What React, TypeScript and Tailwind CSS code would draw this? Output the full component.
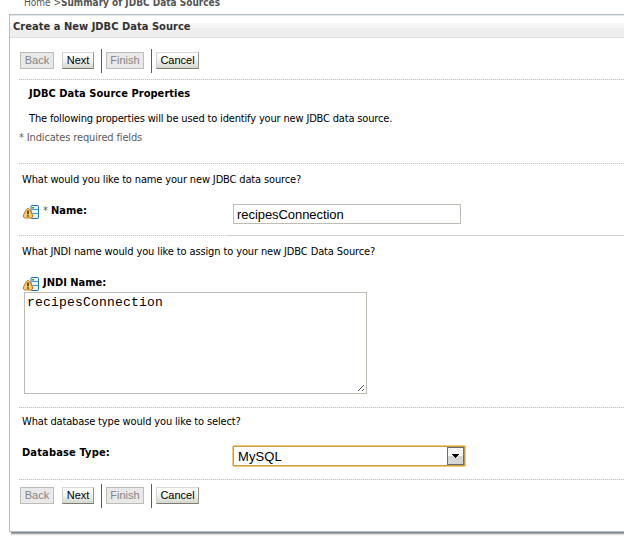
import type { ReactNode } from "react";

const UI = "font-['DejaVu_Sans_Condensed','DejaVu_Sans',sans-serif] [font-stretch:condensed]";

function Dotted() {
  return <div className="ml-[9px] h-px shrink-0 bg-[repeating-linear-gradient(90deg,#c4c4c4_0_1px,#f1f1f1_1px_2px)]" />;
}

function Btn({ children, disabled, className }: { children: ReactNode; disabled?: boolean; className: string }) {
  const look = disabled
    ? "border-[#bdbdb6] bg-[#e9e9e9] text-[#858585]"
    : "border-t-[#d8d8d8] border-l-[#d0d0cc] border-r-[#94948c] border-b-[#7c7c74] bg-linear-to-b from-white via-[#f2f3f0] to-[#d3d7cd] text-black";
  return (
    <button disabled={disabled} className={`mt-[3px] flex h-[17px] shrink-0 items-center justify-center border font-['Liberation_Sans',Arial,sans-serif] text-[11px] leading-[15px] whitespace-nowrap ${look} ${className}`}>
      {children}
    </button>
  );
}

function ButtonBar() {
  return (
    <div className="flex h-6 items-start pl-[10px]">
      <Btn disabled className="w-[34px]">Back</Btn>
      <Btn className="ml-2 w-8">Next</Btn>
      <span className="ml-[7px] h-6 w-px bg-[#5c5c5c]" />
      <Btn disabled className="ml-1 w-[38px]">Finish</Btn>
      <span className="ml-[7px] h-6 w-px bg-[#5c5c5c]" />
      <Btn className="ml-1 w-[43px]">Cancel</Btn>
    </div>
  );
}

function RestartIcon() {
  return (
    <svg width="17" height="16" viewBox="0 0 17 16" className="shrink-0">
      <rect x="8" y="1.500" width="7.500" height="13" rx="1" fill="#d9effb" stroke="#1f6fb0" />
      <path d="M9 5.500h6.500M9 9.500h6.500" stroke="#4e9fd6" />
      <path d="M12 3.500h3M9 7.500h6M10 11.500h5" stroke="#fff" />
      <rect x="9" y="3" width="2" height="1.500" fill="#39a845" />
      <path d="M5 4.500c1.200 0 1.700 .8 2.100 1.800l2.200 4.400c.8 1.800 0 3.300-1.600 3.300H2.300C.7 14-.1 12.500 .7 10.700l2.200-4.400c.4-1 .9-1.800 2.100-1.800z" fill="#fdcb68" stroke="#c5701f" />
      <path d="M5 6.500v3.800M5 11.300v1.500" stroke="#4a2c00" strokeWidth="1.600" />
    </svg>
  );
}

export default function App() {
  return (
    <div className={`flex h-[557px] w-[624px] flex-col overflow-hidden bg-white text-[11px] leading-[14px] whitespace-nowrap text-black ${UI}`}>
      <div className="-mt-1 flex h-[18px] shrink-0 pl-6 text-[10px] text-[#555]">
        <span>Home &gt;</span>
        <b>Summary of JDBC Data Sources</b>
      </div>
      <main className="ml-[9px] flex h-[518px] shrink-0 flex-col border-t border-b border-l border-[#b4bec6] shadow-[2px_1px_0_#888,2px_2px_0_#aaa,2px_3px_1px_#ddd]">
        <h1 className="h-[23px] shrink-0 border-t border-b border-t-[#e3e8ec] border-b-[#dedede] bg-[linear-gradient(#fff_0_7px,#f6f6f6_7px_12px,#eee_12px)] pl-[3px] leading-[21px] font-bold tracking-[0.04px] text-[#333]">
          Create a New JDBC Data Source
        </h1>
        <div className="h-[41px] shrink-0 pt-[11px]"><ButtonBar /></div>
        <Dotted />
        <section className="h-[83px] shrink-0 pt-[7px]">
          <h2 className="pl-[19px] font-bold tracking-[0.04px]">JDBC Data Source Properties</h2>
          <p className="mt-[11px] pl-[19px] tracking-[-0.165px]">The following properties will be used to identify your new JDBC data source.</p>
          <p className="mt-[5px] pl-[9px] tracking-[-0.15px] text-[#5c5c5c]">* Indicates required fields</p>
        </section>
        <Dotted />
        <section className="h-[71px] shrink-0 pt-[9px] pl-[13px]">
          <p className="-ml-px tracking-[-0.15px]">What would you like to name your new JDBC data source?</p>
          <div className="mt-[16px] flex">
            <div className="flex w-[210px]">
              <div className="pt-px"><RestartIcon /></div>
              <span className="mt-px ml-[3px] text-[#555]">*</span>
              <b className="mt-px ml-[3px]">Name:</b>
            </div>
            <div className="mt-px h-5 w-[228px] border border-[#bdbdb5] pl-[3px] font-['Liberation_Sans',Arial,sans-serif] text-[13px] leading-[19px] tracking-[-0.06px]">recipesConnection</div>
          </div>
        </section>
        <div className="flex shrink-0">
          <div className="w-[217px]"><Dotted /></div>
          <div className="h-px flex-1 bg-[#cfcfcf]" />
        </div>
        <section className="h-[171px] shrink-0 pt-[9px] pl-[13px]">
          <p className="-ml-px tracking-[-0.12px]">What JNDI name would you like to assign to your new JDBC Data Source?</p>
          <div className="mt-[16px] flex h-[17px]">
            <div className="pt-px"><RestartIcon /></div>
            <b className="mt-px ml-[3px]">JNDI Name:</b>
          </div>
          <div className="ml-px flex h-[102px] w-[343px] flex-col justify-between border border-[#bdbdb5] pl-[2px] font-['Liberation_Mono','Courier_New',monospace] text-[13px] leading-[20px] tracking-[0.2px]">
            <span>recipesConnection</span>
            <svg width="9" height="9" viewBox="0 0 9 9" className="self-end" shapeRendering="crispEdges">
              <path d="M0.500 7.500L7 1M4.500 7.500L7 5" stroke="#555" fill="none" />
            </svg>
          </div>
        </section>
        <Dotted />
        <section className="h-[71px] shrink-0 pt-[7px] pl-[13px]">
          <p className="-ml-px tracking-[-0.15px]">What database type would you like to select?</p>
          <div className="mt-[16px] flex">
            <b className="mt-px -ml-px w-[210px] tracking-[0.15px]">Database Type:</b>
            <div className="flex h-[22px] w-[234px] rounded-[2px] border border-[#f6ca7c] bg-white">
              <div className="flex flex-1 justify-between border border-[#c99a45] pl-[4px]">
                <span className="font-['Liberation_Sans',Arial,sans-serif] text-[13px] leading-[19px] tracking-[0.1px]">MySQL</span>
                <span className="flex h-[18px] w-[17px] items-center justify-center border border-[#6d6d6d] bg-[linear-gradient(#f6f6f6_0_50%,#d5d5d5_50%)] p-px">
                  <svg width="7" height="4" viewBox="0 0 7 4" shapeRendering="crispEdges"><path d="M0 0h7L3.500 4z" /></svg>
                </span>
              </div>
            </div>
          </div>
        </section>
        <Dotted />
        <div className="pt-[4px]"><ButtonBar /></div>
      </main>
    </div>
  );
}
